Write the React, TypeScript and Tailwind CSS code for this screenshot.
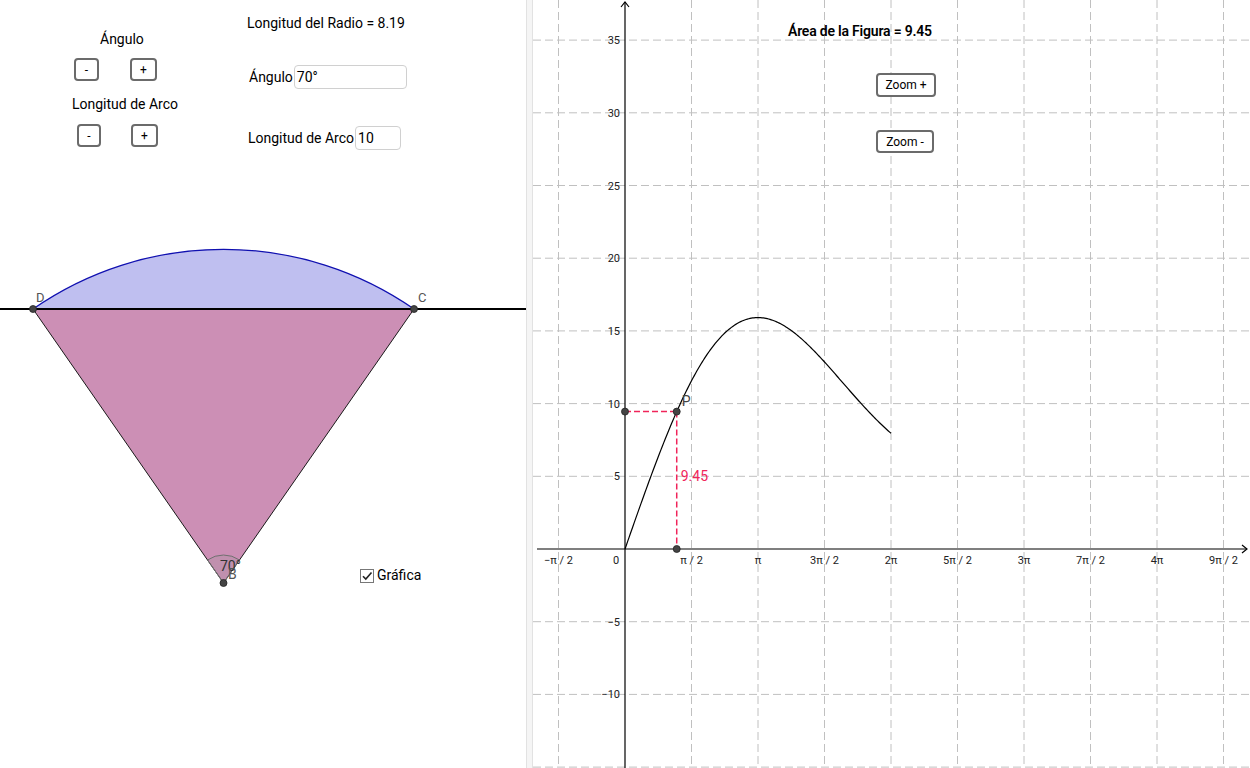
import React from 'react';

// graph scale (page coords): origin at (625, 549)
const OX = 625;
const OY = 549;
const UX = 66.5 / (Math.PI / 2); // px per radian
const UY = 72.7 / 5; // px per unit

const area = (t: number) => (50 / (t * t)) * (t - Math.sin(t));

function curvePath() {
  const pts: string[] = [];
  const n = 200;
  for (let i = 0; i <= n; i++) {
    const t = Math.max(0.0005, (i / n) * Math.PI * 2);
    const x = OX + t * UX;
    const y = OY - area(t) * UY;
    pts.push(`${i === 0 ? 'M' : 'L'}${x.toFixed(2)} ${y.toFixed(2)}`);
  }
  return pts.join(' ');
}

const xLabels = ['−π / 2', '0', 'π / 2', 'π', '3π / 2', '2π', '5π / 2', '3π', '7π / 2', '4π', '9π / 2'];
const yLabels = [35, 30, 25, 20, 15, 10, 5, -5, -10];

function SmallButton({ label, className = '' }: { label: string; className?: string }) {
  return (
    <button
      className={`flex h-[23px] items-center justify-center rounded-[4px] border-2 border-[#6b6b6b] bg-white text-[12px] leading-none text-black ${className}`}
    >
      {label}
    </button>
  );
}

function LeftPanel() {
  const B = { x: 223.5, y: 583 };
  const D = { x: 33, y: 309 };
  const C = { x: 414, y: 309 };
  const r = Math.hypot(C.x - B.x, C.y - B.y);
  const ar = 28;
  const ad = { x: B.x + ((D.x - B.x) / r) * ar, y: B.y + ((D.y - B.y) / r) * ar };
  const ac = { x: B.x + ((C.x - B.x) / r) * ar, y: B.y + ((C.y - B.y) / r) * ar };

  return (
    <div className="relative h-full w-[526px] shrink-0 bg-white">
      <svg className="absolute inset-0" width="526" height="768" viewBox="0 0 526 768">
        <path
          d={`M${B.x} ${B.y} L${D.x} ${D.y} L${C.x} ${C.y} Z`}
          fill="#cc8fb5"
          stroke="#1a1a1a"
          strokeWidth="1"
        />
        <path
          d={`M${D.x} ${D.y} A${r} ${r} 0 0 1 ${C.x} ${C.y} Z`}
          fill="#bfbff0"
          stroke="#1010b0"
          strokeWidth="1.3"
        />
        <line x1="0" y1="309" x2="526" y2="309" stroke="#000" strokeWidth="2" />
        <path
          d={`M${B.x} ${B.y} L${ad.x} ${ad.y} A${ar} ${ar} 0 0 1 ${ac.x} ${ac.y} Z`}
          fill="rgba(150,150,150,0.22)"
          stroke="#707070"
          strokeWidth="1"
        />
        <text x="220" y="571" fontSize="14" fill="#333" fontFamily="Roboto, sans-serif">70°</text>
        <text x="228" y="579" fontSize="14" fill="#555" fontFamily="Roboto, sans-serif">B</text>
        <text x="36" y="302" fontSize="13" fill="#555" fontFamily="Roboto, sans-serif">D</text>
        <text x="418" y="302" fontSize="13" fill="#555" fontFamily="Roboto, sans-serif">C</text>
        {[D, C, B].map((p, i) => (
          <circle key={i} cx={p.x} cy={p.y} r="3.5" fill="#444" stroke="#222" strokeWidth="0.8" />
        ))}
      </svg>

      {/* step buttons */}
      <div className="absolute left-[72px] top-[29px] flex w-[108px] flex-col text-[14px] leading-[20px] text-black">
        <div className="pl-[28px]">Ángulo</div>
        <div className="mt-[9px] flex gap-[31px] pl-[2px]">
          <SmallButton label="-" className="w-[25px]" />
          <SmallButton label="+" className="w-[27px]" />
        </div>
        <div className="mt-[13px]">Longitud de Arco</div>
        <div className="mt-[10px] flex gap-[30px] pl-[5px]">
          <SmallButton label="-" className="w-[24px]" />
          <SmallButton label="+" className="w-[27px]" />
        </div>
      </div>

      {/* values */}
      <div className="absolute left-[247px] top-[13px] flex flex-col text-[14px] leading-[20px] text-black">
        <div>Longitud del Radio = 8.19</div>
        <div className="mt-[32px] flex h-[24px] items-center gap-[1px] pl-[2px]">
          <span>Ángulo</span>
          <div className="flex h-[24px] w-[113px] items-center rounded-[4px] border border-[#d0d0d0] bg-white px-[2px]">
            70°
          </div>
        </div>
        <div className="mt-[37px] flex h-[24px] items-center gap-[1px] pl-[1px]">
          <span>Longitud de Arco</span>
          <div className="flex h-[24px] w-[46px] items-center rounded-[4px] border border-[#d0d0d0] bg-white px-[2px]">
            10
          </div>
        </div>
      </div>

      <label className="absolute left-[360px] top-[565px] flex items-center gap-[3px]">
        <span className="flex h-[14px] w-[14px] items-center justify-center border border-[#777] bg-white">
          <svg width="12" height="12" viewBox="0 0 12 12">
            <path d="M2 6.2 L4.8 9 L10.5 2.5" fill="none" stroke="#222" strokeWidth="1.6" />
          </svg>
        </span>
        <span className="text-[14px] text-black">Gráfica</span>
      </label>
    </div>
  );
}

function RightPanel() {
  const px = OX + (70 * Math.PI) / 180 * UX;
  const py = OY - 9.45 * UY;
  const font = 'Roboto, sans-serif';
  return (
    <div className="relative h-full flex-1 bg-white">
      <svg className="absolute inset-0" width="717" height="768" viewBox="533 0 717 768">
        {/* grid */}
        {[-3, -2, -1, 1, 2, 3, 4, 5, 6, 7].map((k) => (
          <line
            key={`h${k}`}
            x1="533"
            x2="1250"
            y1={OY - k * 72.7}
            y2={OY - k * 72.7}
            stroke="#c0c0c0"
            strokeWidth="1"
            strokeDasharray="8 4"
          />
        ))}
        {[-1, 1, 2, 3, 4, 5, 6, 7, 8, 9].map((k) => (
          <line
            key={`v${k}`}
            y1="0"
            y2="768"
            x1={OX + k * 66.5}
            x2={OX + k * 66.5}
            stroke="#c0c0c0"
            strokeWidth="1"
            strokeDasharray="8 4"
          />
        ))}
        {/* axes */}
        <line x1={OX} y1="768" x2={OX} y2="2" stroke="#000" strokeWidth="1.2" />
        <path d={`M${OX - 4} 7 L${OX} 2 L${OX + 4} 7`} fill="none" stroke="#000" strokeWidth="1.2" />
        <line x1="537" y1={OY} x2="1247" y2={OY} stroke="#000" strokeWidth="1.2" />
        <path d={`M1242 ${OY - 4} L1247 ${OY} L1242 ${OY + 4}`} fill="none" stroke="#000" strokeWidth="1.2" />

        {/* labels */}
        {yLabels.map((v) => (
          <text
            key={v}
            x={OX - 5}
            y={OY - (v / 5) * 72.7 + 4}
            fontSize="11"
            fill="#222"
            textAnchor="end"
            fontFamily={font}
          >
            {v < 0 ? `−${-v}` : v}
          </text>
        ))}
        {xLabels.map((l, i) => (
          <text
            key={l}
            x={i === 1 ? 616 : OX + (i - 1) * 66.5}
            y={OY + 15}
            fontSize="11"
            fill="#222"
            textAnchor="middle"
            fontFamily={font}
          >
            {l}
          </text>
        ))}

        {/* curve */}
        <path d={curvePath()} fill="none" stroke="#000" strokeWidth="1.2" />

        {/* P projections */}
        <line x1={OX} y1={py} x2={px} y2={py} stroke="#f0245a" strokeWidth="1.5" strokeDasharray="6 3" />
        <line x1={px} y1={py} x2={px} y2={OY} stroke="#f0245a" strokeWidth="1.5" strokeDasharray="6 3" />
        {[
          [OX, py],
          [px, py],
          [px, OY],
        ].map(([x, y], i) => (
          <circle key={i} cx={x} cy={y} r="3.5" fill="#444" stroke="#222" strokeWidth="0.8" />
        ))}
        <text x={px + 5} y={py - 6} fontSize="14" fill="#444" fontFamily={font}>P</text>
        <text x={px + 4} y="481" fontSize="14" fill="#f0245a" fontFamily={font}>9.45</text>
      </svg>

      <div className="absolute left-[255px] top-[21px] flex w-[150px] flex-col items-end">
        <div className="self-start text-[14px] font-semibold leading-[20px] tracking-[-0.2px] text-black">
          Área de la Figura = 9.45
        </div>
        <div className="mt-[32px] flex flex-col items-start gap-[33px] pr-[2px]">
          <button className="flex h-[24px] w-[60px] items-center justify-center rounded-[4px] border-2 border-[#6b6b6b] bg-white text-[12px] text-black">
            Zoom +
          </button>
          <button className="flex h-[23px] w-[58px] items-center justify-center rounded-[4px] border-2 border-[#6b6b6b] bg-white text-[12px] text-black">
            Zoom -
          </button>
        </div>
      </div>
    </div>
  );
}

export default function App() {
  return (
    <div className="flex h-[768px] w-[1250px] overflow-hidden bg-white font-['Roboto',sans-serif]">
      <LeftPanel />
      <div className="h-full w-[7px] shrink-0 border-x border-[#e2e2e2] bg-[#f5f5f5]" />
      <RightPanel />
    </div>
  );
}
